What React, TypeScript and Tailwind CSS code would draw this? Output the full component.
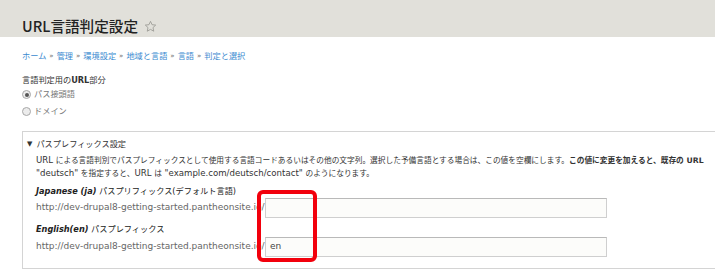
import React from "react";

/** URL言語判定設定 – Drupal 8 admin page (Seven theme), partial view. */

function Star() {
  return (
    <svg width="13" height="13" viewBox="0 0 24 24" className="ml-[6px] mt-[1px]">
      <path
        d="M12 2.5l2.9 6.2 6.7.7-5 4.6 1.4 6.7L12 17.3l-6 3.4 1.4-6.7-5-4.6 6.7-.7z"
        fill="none"
        stroke="#9a9a94"
        strokeWidth="1.6"
        strokeLinejoin="round"
      />
    </svg>
  );
}

function Radio({ checked, label }: { checked?: boolean; label: string }) {
  return (
    <div className="flex items-center h-[11px] leading-[11px]">
      <span className="w-[9px] h-[9px] rounded-full border border-[#a8a8a8] bg-[#ececec] flex items-center justify-center">
        {checked && <span className="w-[4px] h-[4px] rounded-full bg-[#555]" />}
      </span>
      <span className="ml-[3px] text-[#777]">{label}</span>
    </div>
  );
}

function TextField({ value }: { value?: string }) {
  return (
    <div className="flex items-center h-[20px] mt-[1px]">
      <span className="w-[229px] text-[9px] text-[#666] whitespace-nowrap overflow-hidden">
        http://dev-drupal8-getting-started.pantheonsite.io/
      </span>
      <div className="w-[342px] h-[20px] border border-[#cfcfcf] border-t-[#b9b9b9] bg-[#fcfcfa] flex items-center pl-[4px] text-[9px] text-[#444]">
        {value}
      </div>
    </div>
  );
}

const crumbs = ["ホーム", "管理", "環境設定", "地域と言語", "言語", "判定と選択"];

export default function App() {
  return (
    <div className="relative w-[715px] h-[275px] overflow-hidden bg-white text-[8.2px] text-[#333] font-['DejaVu_Sans','Noto_Sans_CJK_JP',sans-serif]">
      {/* ページタイトル */}
      <div className="h-[37px] bg-[#e1e0da] pl-[22px] pt-[16px]">
        <div className="flex items-center h-[20px]">
          <h1 className="text-[14.6px] leading-[20px] font-medium text-[#222] font-['Noto_Sans_CJK_JP',sans-serif]">
            URL言語判定設定
          </h1>
          <Star />
        </div>
      </div>

      {/* パンくず */}
      <div className="mt-[13px] pl-[22px] h-[12px] leading-[12px] flex items-center whitespace-nowrap">
        {crumbs.map((c, i) => (
          <span key={c} className="flex items-center">
            {i > 0 && <span className="mx-[3px] text-[#666] text-[7px]">»</span>}
            <span className="text-[#3b8ad0]">{c}</span>
          </span>
        ))}
      </div>

      {/* 言語判定用のURL部分 */}
      <div className="pl-[22px]">
        <div className="mt-[12px] h-[12px] leading-[12px] text-[#333]">
          言語判定用の<span className="font-semibold">URL</span>部分
        </div>
        <div className="mt-[3px]">
          <Radio checked label="パス接頭語" />
        </div>
        <div className="mt-[6px]">
          <Radio label="ドメイン" />
        </div>
      </div>

      {/* パスプレフィックス設定 */}
      <div className="ml-[22px] mt-[14px] w-[720px] border border-[#d4d4d4] pb-[11px]">
        <div className="pt-[6px] pl-[4px] h-[18px] leading-[12px] flex items-center">
          <span className="text-[7px] mr-[4px] text-[#333]">▼</span>
          <span>パスプレフィックス設定</span>
        </div>
        <div className="pl-[13px]">
          <div className="mt-[4px] leading-[12px] whitespace-nowrap text-[7.7px]">
            <div>
              <span className="text-[8.6px]">URL </span>
              による言語判別でパスプレフィックスとして使用する言語コードあるいはその他の文字列。選択した予備言語とする場合は、この値を空欄にします。
              <strong className="font-bold">この値に変更を加えると、既存の URL</strong>
            </div>
            <div>
              <span className="text-[8.6px]">"deutsch" </span>を指定すると、
              <span className="text-[8.6px]">URL </span>は
              <span className="text-[8.6px]"> "example.com/deutsch/contact" </span>のようになります。
            </div>
          </div>

          <div className="mt-[5px] h-[12px] leading-[12px] text-[#222]">
            <span className="font-bold italic">Japanese (ja)</span> パスプリフィックス(デフォルト言語)
          </div>
          <TextField />

          <div className="mt-[5px] h-[12px] leading-[12px] text-[#222]">
            <span className="font-bold italic">English(en)</span> パスプレフィックス
          </div>
          <div className="mt-[2px]">
            <TextField value="en" />
          </div>
        </div>
      </div>

      {/* 強調枠 */}
      <div className="absolute left-[257px] top-[190px] w-[60px] h-[72px] border-[4px] border-[#f2000c] rounded-[6px]" />
    </div>
  );
}
